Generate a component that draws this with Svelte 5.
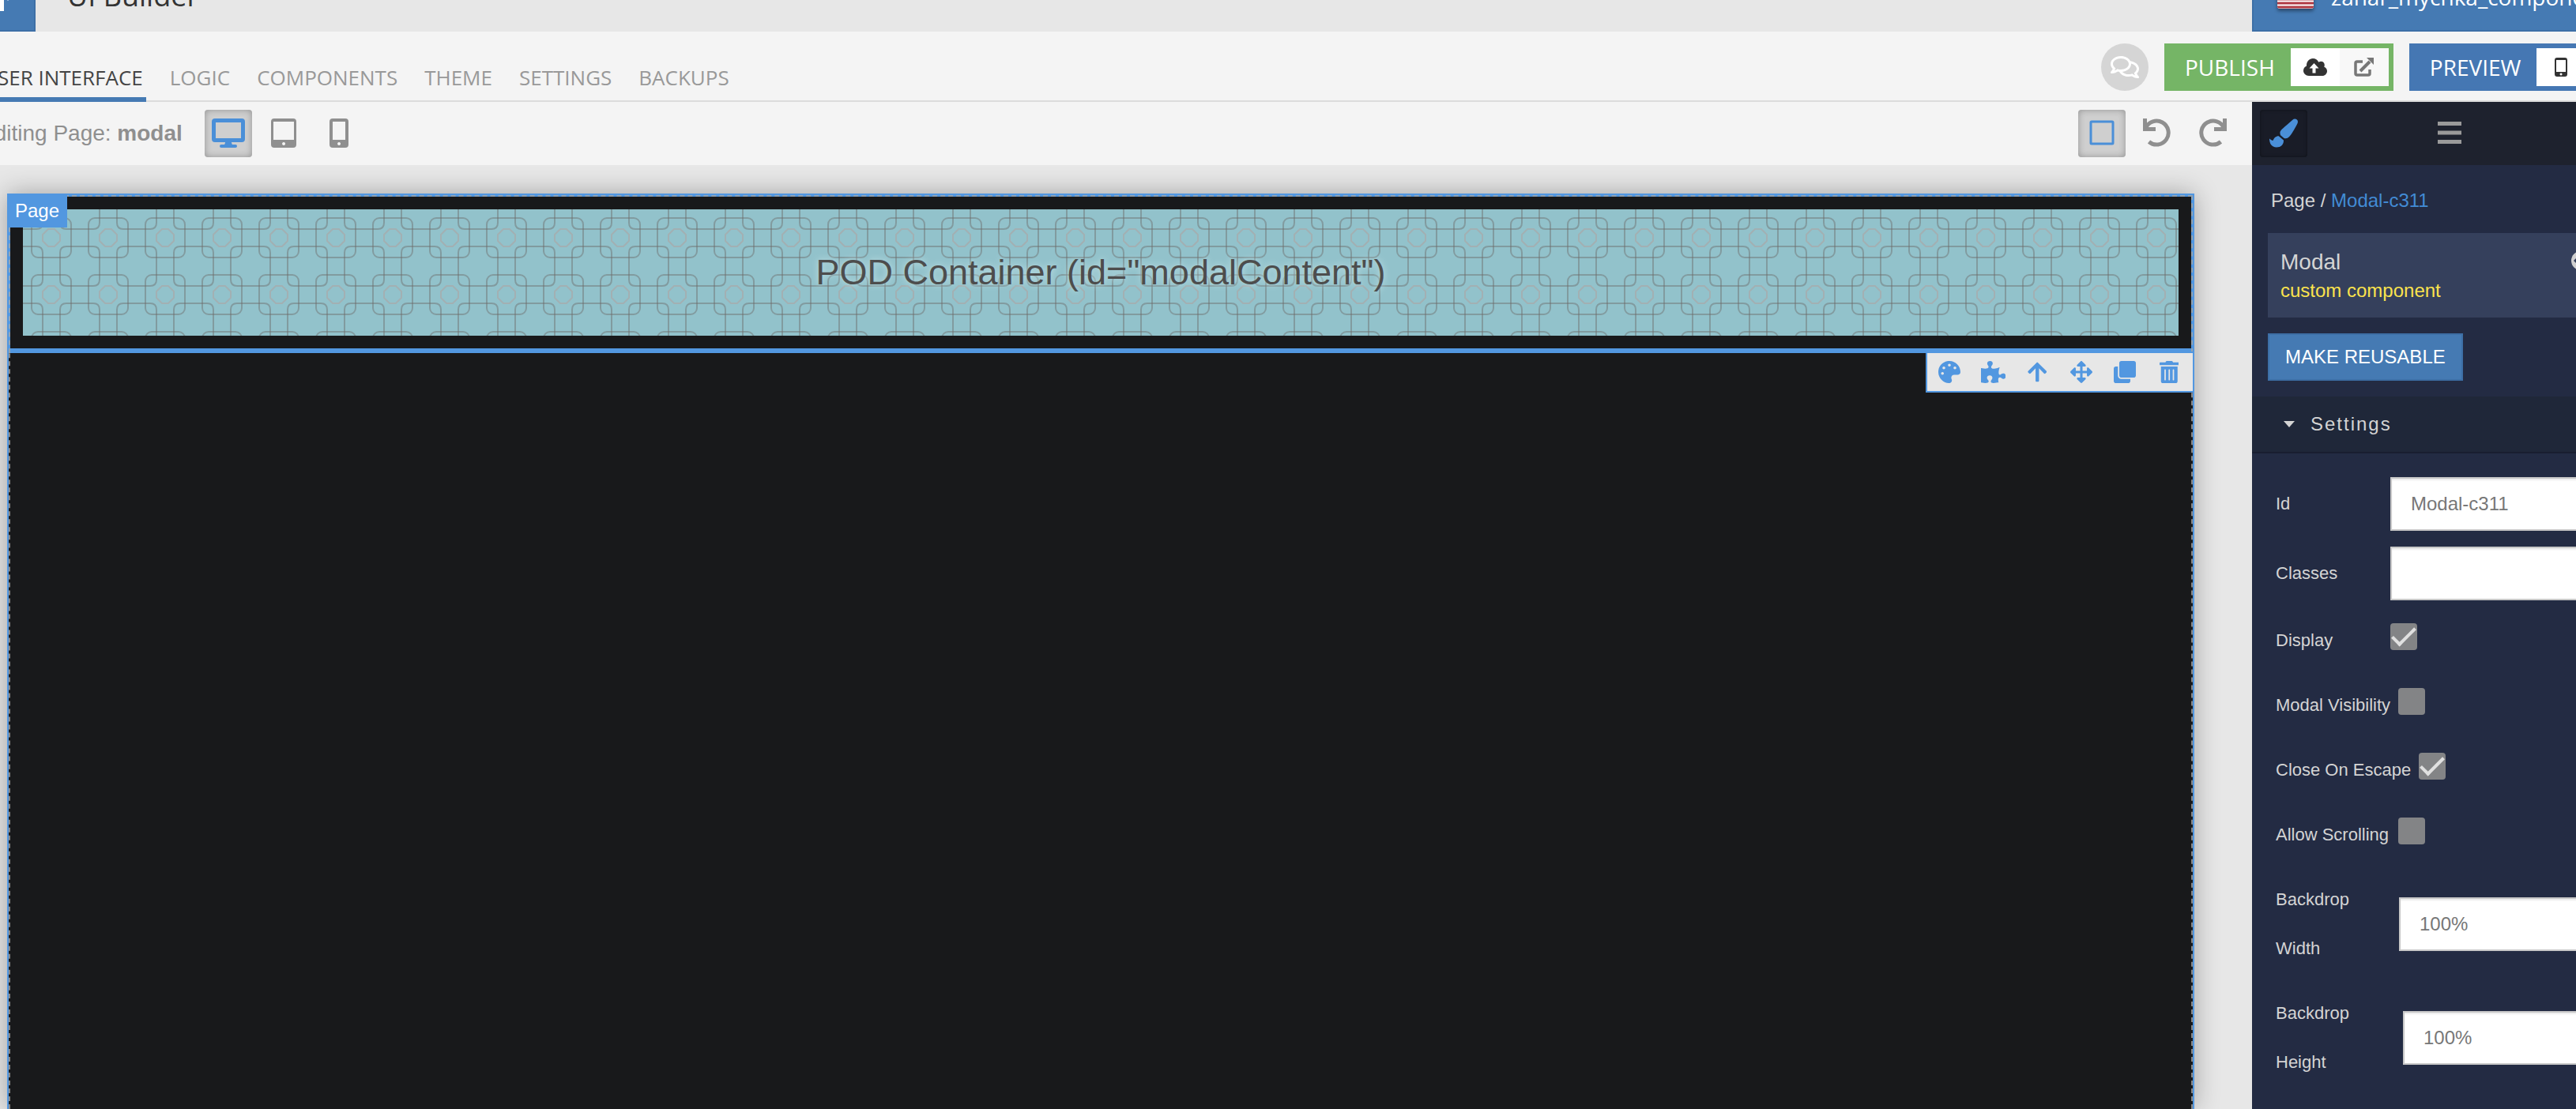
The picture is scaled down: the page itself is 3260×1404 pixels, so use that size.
<script>
  const tabs = ['User Interface', 'Logic', 'Components', 'Theme', 'Settings', 'Backups'];

  const tools = [
    { name: 'Style', box: '0 0 512 512', d: 'M204.3 5C104.9 24.4 24.8 104.3 5.2 203.4c-37 187 131.7 326.4 258.8 306.7 41.2-6.4 61.4-54.6 42.5-91.7-23.1-45.4 9.9-98.4 60.9-98.4h79.7c35.8 0 64.8-29.6 64.9-65.3C511.5 97.1 368.1-26.9 204.3 5zM96 320c-17.7 0-32-14.3-32-32s14.3-32 32-32 32 14.3 32 32-14.3 32-32 32zm32-128c-17.7 0-32-14.3-32-32s14.3-32 32-32 32 14.3 32 32-14.3 32-32 32zm128-64c-17.7 0-32-14.3-32-32s14.3-32 32-32 32 14.3 32 32-14.3 32-32 32zm128 64c-17.7 0-32-14.3-32-32s14.3-32 32-32 32 14.3 32 32-14.3 32-32 32z' },
    { name: 'Component', box: '0 0 576 512', d: 'M519.442 288.651c-41.519 0-59.5 31.593-82.058 31.593C377.409 320.244 432 144 432 144s-196.288 80-196.288-3.297c0-35.827 36.288-46.25 36.288-85.985C272 19.216 243.885 0 210.539 0c-34.654 0-66.366 18.891-66.366 56.346 0 41.364 31.711 59.277 31.711 81.75C175.885 207.719 0 166.758 0 166.758v333.237s178.635 41.047 178.635-28.662c0-22.473-40-40.107-40-81.471 0-37.456 29.25-56.346 63.577-56.346 33.673 0 61.788 19.216 61.788 54.717 0 39.735-36.288 50.158-36.288 85.985 0 60.803 129.675 25.73 181.23 25.73 0 0-34.725-120.101 25.827-120.101 35.962 0 46.423 36.152 86.308 36.152C556.712 416 576 387.99 576 354.443c0-34.199-18.962-65.792-56.558-65.792z' },
    { name: 'Select parent', box: '0 0 448 512', d: 'M34.9 289.5l-22.2-22.2c-9.4-9.4-9.4-24.6 0-33.9L207 39c9.4-9.4 24.6-9.4 33.9 0l194.3 194.3c9.4 9.4 9.4 24.6 0 33.9L413 289.4c-9.5 9.5-25 9.3-34.3-.4L264 168.6V456c0 13.3-10.7 24-24 24h-32c-13.3 0-24-10.7-24-24V168.6L69.2 289.1c-9.3 9.8-24.8 10-34.3.4z' },
    { name: 'Move', box: '0 0 512 512', d: 'M352.201 425.775l-79.196 79.196c-9.373 9.373-24.568 9.373-33.941 0l-79.196-79.196c-15.119-15.119-4.411-40.971 16.971-40.97h51.162L228 284H127.196v51.162c0 21.382-25.851 32.09-40.971 16.971L7.029 272.937c-9.373-9.373-9.373-24.569 0-33.941L86.225 159.8c15.119-15.119 40.971-4.411 40.971 16.971V228H228V127.196h-51.23c-21.382 0-32.09-25.851-16.971-40.971l79.196-79.196c9.373-9.373 24.568-9.373 33.941 0l79.196 79.196c15.119 15.119 4.411 40.971-16.971 40.971h-51.162V228h100.804v-51.162c0-21.382 25.851-32.09 40.97-16.971l79.196 79.196c9.373 9.373 9.373 24.569 0 33.941L425.773 352.2c-15.119 15.119-40.971 4.411-40.97-16.971V284H284v100.804h51.23c21.382 0 32.09 25.851 16.971 40.971z' },
    { name: 'Duplicate', box: '0 0 512 512', d: 'M464 0c26.51 0 48 21.49 48 48v288c0 26.51-21.49 48-48 48H176c-26.51 0-48-21.49-48-48V48c0-26.51 21.49-48 48-48h288M176 416c-44.112 0-80-35.888-80-80V128H48c-26.51 0-48 21.49-48 48v288c0 26.51 21.49 48 48 48h288c26.51 0 48-21.49 48-48v-48H176z' },
    { name: 'Delete', box: '0 0 448 512', d: 'M32 464a48 48 0 0 0 48 48h288a48 48 0 0 0 48-48V128H32zm272-256a16 16 0 0 1 32 0v224a16 16 0 0 1-32 0zm-96 0a16 16 0 0 1 32 0v224a16 16 0 0 1-32 0zm-96 0a16 16 0 0 1 32 0v224a16 16 0 0 1-32 0zM432 32H312l-9.4-18.7A24 24 0 0 0 281.1 0H166.8a23.72 23.72 0 0 0-21.4 13.3L136 32H16A16 16 0 0 0 0 48v32a16 16 0 0 0 16 16h416a16 16 0 0 0 16-16V48a16 16 0 0 0-16-16z' }
  ];

  let id = $state('Modal-c311');
  let classes = $state('');
  let backdropWidth = $state('100%');
  let backdropHeight = $state('100%');
  let flags = $state([
    { key: 'display', label: 'Display', on: true },
    { key: 'visible', label: 'Modal Visibility', on: false },
    { key: 'escape', label: 'Close On Escape', on: true },
    { key: 'scroll', label: 'Allow Scrolling', on: false }
  ]);
</script>

<div class="app">
  <header class="top">
    <div class="logo">
      <svg viewBox="0 0 45 40" aria-hidden="true"><path d="M0 0h5v14H0z" fill="#fff" /><circle cx="10" cy="0" r="1" fill="#a9c4e4" /></svg>
    </div>
    <h1>UI Builder</h1>
    <div class="account">
      <svg class="flag" viewBox="0 0 46 32" aria-hidden="true">
        <rect width="46" height="32" fill="#fff" />
        <path d="M0 1h46M0 6h46M0 11h46M0 16h46M0 20h46M0 25h46M0 30h46" stroke="#b03a43" stroke-width="3" />
        <rect width="20" height="18" fill="#3c3b6e" />
      </svg>
      <span>zahar_mychka_components</span>
    </div>
  </header>

  <div class="navbar">
    <nav class="tabs">
      {#each tabs as tab, i}
        <a href="#{tab}" class:active={i === 0}>{tab}</a>
      {/each}
    </nav>
    <div class="actions">
      <button class="chat" aria-label="Comments">
        <svg viewBox="0 32 576 448" aria-hidden="true">
          <path fill="#fff" d="M532 386.200c27.500-27.100 44-61.100 44-98.200 0-80-76.500-146.100-176.200-157.900C368.300 72.500 294.300 32 208 32 93.100 32 0 103.600 0 192c0 37 16.500 71 44 98.200-15.300 30.700-37.300 54.500-37.700 54.900-6.300 6.700-8.100 16.500-4.400 25 3.600 8.500 12 14 21.200 14 53.500 0 96.700-20.200 125.200-38.800 9.200 2.100 18.700 3.700 28.400 4.900C208.100 407.600 281.800 448 368 448c20.800 0 40.800-2.400 59.800-6.800C456.300 459.700 499.400 480 553 480c9.200 0 17.500-5.500 21.200-14 3.600-8.500 1.900-18.300-4.400-25-.4-.3-22.500-24.100-37.800-54.800zm-392.800-92.300L122.100 305c-14.100 9.100-28.500 16.300-43.100 21.400 2.700-4.700 5.400-9.700 8-14.800l15.500-31.100L77.700 256C64.200 242.600 48 220.700 48 192c0-60.700 73.300-112 160-112s160 51.300 160 112-73.300 112-160 112c-16.500 0-33-1.900-49-5.600l-19.800-4.500zM498.300 352l-24.700 24.400 15.500 31.100c2.600 5.100 5.300 10.100 8 14.800-14.600-5.100-29-12.300-43.100-21.400l-17.100-11.100-19.900 4.600c-16 3.700-32.500 5.600-49 5.600-54 0-102.200-20.100-131.300-49.700C338 339.500 416 272.900 416 192c0-3.400-.4-6.700-.7-10C479.700 196.500 528 238.800 528 288c0 28.700-16.200 50.600-29.700 64z" />
        </svg>
      </button>
      <div class="split publish">
        <button class="main">Publish</button>
        <button class="sub" aria-label="Upload">
          <svg width="30" height="22" viewBox="0 0 30 22" aria-hidden="true">
            <path fill="#333" d="M7 22C3 22 0 19 0 15.500c0-2.700 1.600-5 4-6V8.500C4 3.800 7.600 0 12 0c3.300 0 6 1.900 7.300 4.700 .9-.7 1.900-1 3-1 2.600 0 4.500 2 4.500 4.500 0 .8-.2 1.500-.6 2.200C28.500 11.300 30 13.400 30 16c0 3.300-2.700 6-6 6z" />
            <path fill="#fff" d="M13.500 6l6 6.500h-4v6h-4v-6h-4z" />
          </svg>
        </button>
        <button class="sub dim" aria-label="Open published">
          <svg width="25" height="24" viewBox="0 0 25 24" aria-hidden="true">
            <path d="M11 5H4Q2 5 2 7v13q0 2 2 2h14q2 0 2-2v-5" fill="none" stroke="#777" stroke-width="3.500" />
            <path d="M8 17L20 5" stroke="#777" stroke-width="4" />
            <path d="M16 0h9v9z" fill="#777" />
          </svg>
        </button>
      </div>
      <div class="split preview">
        <button class="main">Preview</button>
        <button class="sub" aria-label="Preview on phone">
          <svg width="16" height="24" viewBox="0 0 16 24" aria-hidden="true"><path fill="#333" fill-rule="evenodd" d="M3 0h10q3 0 3 3v18q0 3-3 3H3q-3 0-3-3V3q0-3 3-3zM2 3v15h12V3zM8 19.500a1.500 1.500 0 1 0 .1 0z" /></svg>
        </button>
        <button class="sub dim" aria-label="Open preview"></button>
      </div>
    </div>
  </div>

  <div class="work">
    <main>
      <div class="bar">
        <p>Editing Page: <strong>modal</strong></p>
        <div class="devices">
          <button class="tool on" aria-label="Desktop">
            <svg width="42" height="37" viewBox="0 0 42 37" aria-hidden="true"><path fill="#4a8fd8" fill-rule="evenodd" d="M4 0h34q4 0 4 4v22q0 4-4 4H25q0 2 1 3h4q2 0 2 2t-2 2H12q-2 0-2-2t2-2h4q1-1 1-3H4q-4 0-4-4V4q0-4 4-4zM5 5v20h32V5z" /></svg>
          </button>
          <button class="tool" aria-label="Tablet">
            <svg width="32" height="37" viewBox="0 0 32 37" aria-hidden="true"><path fill="#8f8f8f" fill-rule="evenodd" d="M4 0h24q4 0 4 4v29q0 4-4 4H4q-4 0-4-4V4q0-4 4-4zM3 4v23h26V4zM16 30a2 2 0 1 0 .1 0z" /></svg>
          </button>
          <button class="tool" aria-label="Phone">
            <svg width="24" height="37" viewBox="0 0 24 37" aria-hidden="true"><path fill="#8f8f8f" fill-rule="evenodd" d="M4 0h16q4 0 4 4v29q0 4-4 4H4q-4 0-4-4V4q0-4 4-4zM4 4v23h16V4zM12 30a2 2 0 1 0 .1 0z" /></svg>
          </button>
        </div>
        <div class="history">
          <button class="tool on" aria-label="Outlines">
            <svg width="32" height="32" viewBox="0 0 32 32" aria-hidden="true"><rect x="2" y="2" width="28" height="28" rx="1" fill="none" stroke="#4a8fd8" stroke-width="3" /></svg>
          </button>
          <button class="tool" aria-label="Undo">
            <svg width="36" height="36" viewBox="0 0 36 36" aria-hidden="true"><path d="M3.500 12A15 15 0 1 1 7.500 29.500" fill="none" stroke="#8f8f8f" stroke-width="5" /><path d="M0 0h5v11h11v5H0z" fill="#8f8f8f" /></svg>
          </button>
          <button class="tool" aria-label="Redo">
            <svg width="36" height="36" viewBox="0 0 36 36" aria-hidden="true"><path d="M32.500 12A15 15 0 1 0 28.500 29.500" fill="none" stroke="#8f8f8f" stroke-width="5" /><path d="M36 0h-5v11H20v5h16z" fill="#8f8f8f" /></svg>
          </button>
        </div>
      </div>

      <div class="stage">
        <div class="page">
          <span class="badge">Page</span>
          <section class="pod">
            <div class="tile">
              <svg class="weave" aria-hidden="true">
                <defs>
                  <pattern id="weave" width="72" height="72" patternUnits="userSpaceOnUse">
                    <g fill="none" stroke="#6d6b6b" stroke-opacity=".45" stroke-width="2">
                      <rect x="11" y="11" width="50" height="50" rx="8" />
                      <path d="M25 0v17q0 8-8 8H0M47 0v17q0 8 8 8h17M0 47h17q8 0 8 8v17M72 47H55q-8 0-8 8v17" />
                      <path d="M32 25h8l7 7v8l-7 7h-8l-7-7v-8z" stroke="#b8968f" stroke-opacity=".4" />
                    </g>
                  </pattern>
                </defs>
                <rect width="100%" height="100%" fill="url(#weave)" />
              </svg>
              <h2>POD Container (id="modalContent")</h2>
            </div>
            <div class="tools" role="toolbar">
              {#each tools as t}
                <button aria-label={t.name}><svg viewBox={t.box} aria-hidden="true"><path fill="#5297e0" d={t.d} /></svg></button>
              {/each}
            </div>
          </section>
        </div>
      </div>
    </main>

    <aside>
      <div class="panel-tabs">
        <button class="tool dark" aria-label="Styles">
          <svg width="36" height="37" viewBox="0 0 512 512" aria-hidden="true"><path fill="#4a8fd8" d="M167.020 309.340c-40.120 2.580-76.530 17.860-97.190 72.300-2.350 6.210-8 9.980-14.590 9.980-11.110 0-45.460-27.670-55.250-34.350C0 439.620 37.930 512 128 512c75.860 0 128-43.770 128-120.190 0-3.110-.65-6.080-.97-9.130l-88.010-73.340zM457.890 0c-15.160 0-29.370 6.710-40.210 16.450C213.270 199.050 192 203.340 192 257.090c0 13.700 3.250 26.760 8.730 38.700l63.820 53.180c7.210 1.800 14.640 3.030 22.390 3.030 62.110 0 98.110-45.470 211.160-256.460 7.380-14.350 13.900-29.850 13.900-45.990C512 20.640 486 0 457.890 0z" /></svg>
        </button>
        <button class="tool" aria-label="Tree">
          <svg width="32" height="30" viewBox="0 0 32 30" aria-hidden="true"><path d="M1 3.500h30M1 15h30M1 26.500h30" stroke="#9a9a9a" stroke-width="5" /></svg>
        </button>
      </div>
      <p class="crumbs">Page / <a href="#modal">Modal-c311</a></p>
      <div class="card">
        <div>
          <h3>Modal</h3>
          <p>custom component</p>
        </div>
        <svg width="24" height="24" viewBox="0 0 24 24" aria-hidden="true"><circle cx="12" cy="12" r="12" fill="#d0d0d0" /><path fill="#35405c" d="M3 12l6-6v12z" /></svg>
      </div>
      <button class="reuse">Make reusable</button>
      <button class="section"><svg width="14" height="8" viewBox="0 0 14 8" aria-hidden="true"><path d="M0 0h14L7 8z" fill="#d4d4d4" /></svg><span>Settings</span></button>
      <form>
        <div class="row"><label for="id">Id</label><input id="id" type="text" bind:value={id} /></div>
        <div class="row"><label for="classes">Classes</label><input id="classes" type="text" bind:value={classes} /></div>
        {#each flags as f}
          <div class="row check"><label for={f.key}>{f.label}</label><input id={f.key} type="checkbox" bind:checked={f.on} /></div>
        {/each}
        <div class="row"><label class="wrap" for="bw">Backdrop Width</label><input id="bw" type="text" bind:value={backdropWidth} /></div>
        <div class="row"><label class="wrap tall" for="bh">Backdrop Height</label><input id="bh" type="text" bind:value={backdropHeight} /></div>
      </form>
    </aside>
  </div>
</div>

<style>
  :global(body) { overflow: hidden; }
  .app, .app * { box-sizing: border-box; }
  .app {
    height: 100vh;
    display: flex;
    flex-direction: column;
    overflow: hidden;
    background: #e7e7e7;
    font-family: "Liberation Sans", Arial, sans-serif;
    font-size: 24px;
  }
  h1, h2, h3, p { margin: 0; font-weight: 400; }
  a { color: inherit; text-decoration: none; }
  button { margin: 0; padding: 0; border: 0; background: none; font: inherit; color: inherit; cursor: pointer; }
  svg { display: block; flex: none; }

  .top { flex: none; height: 40px; display: flex; background: #e7e7e7; font-family: "Open Sans", sans-serif; overflow: hidden; }
  .logo { width: 45px; background: #457ab3; border: solid #3d6fa6; border-width: 0 2px 2px 0; }
  .logo svg { width: 45px; height: 40px; }
  h1 { flex: 1; margin-top: -29px; padding-left: 40px; font-size: 36px; line-height: 48px; color: #333; }
  .account { flex: none; width: 410px; padding-left: 30px; display: flex; gap: 22px; background: #457ab3; border: solid #3d6fa6; border-width: 0 0 2px 2px; color: #fff; font-size: 28px; line-height: 40px; }
  .account span { margin-top: -24px; }
  .flag { width: 46px; height: 32px; margin-top: -21px; border-radius: 3px; filter: drop-shadow(0 3px 2px rgba(0, 0, 0, .4)); }

  .navbar { flex: none; height: 89px; display: flex; justify-content: space-between; background: #f4f4f4; border-bottom: 2px solid #dcdcdc; font-family: "Open Sans", sans-serif; }
  .tabs { display: flex; gap: 26px; margin-left: -26px; }
  .tabs a { height: 89px; padding: 34px 4px 0; font-size: 26px; line-height: 48px; text-transform: uppercase; white-space: nowrap; color: #999; }
  .tabs a.active { color: #444; border-bottom: 6px solid #457ab3; }
  .actions { display: flex; gap: 20px; flex: none; width: 601px; padding-top: 15px; }
  .chat { flex: none; width: 60px; height: 60px; border-radius: 50%; background: #d5d5d5; display: grid; place-items: center; }
  .chat svg { width: 36px; height: 28px; }
  .split { flex: none; height: 60px; display: flex; padding: 6px; color: #fff; font-size: 28px; }
  .publish { background: #75b566; }
  .preview { background: #4577b3; }
  .main { padding: 0 20px; text-transform: uppercase; line-height: 48px; }
  .sub { width: 62px; background: #fff; display: grid; place-items: center; }
  .dim { background: #f8f8f8; }

  .work { flex: 1; min-height: 0; display: flex; }
  main { flex: 1; min-width: 0; display: flex; flex-direction: column; }
  .bar { flex: none; height: 80px; display: flex; align-items: center; background: #f4f4f4; color: #8f8f8f; font-size: 28px; }
  .bar p { margin-left: -26px; white-space: nowrap; }
  .devices, .history { display: flex; gap: 10px; }
  .devices { margin-left: 28px; }
  .history { margin-left: auto; padding-right: 20px; }
  .tool { flex: none; width: 60px; height: 60px; padding-bottom: 2px; border-radius: 4px; display: grid; place-items: center; }
  .tool.on { background: #cfcfcf; box-shadow: inset 0 0 8px rgba(0, 0, 0, .3); }
  .stage { flex: 1; min-height: 0; padding: 36px 73px 0 9px; }
  .page { position: relative; height: 100%; background: #18191b; border: solid #5297e0; border-width: 2px 2px 0; box-shadow: 0 0 30px rgba(0, 0, 0, .3); }
  .page::before { content: ""; position: absolute; inset: 0; border: dashed #858585; border-width: 2px 2px 0; pointer-events: none; }
  .badge { position: absolute; z-index: 1; top: -2px; left: -2px; padding: 0 10px; background: #5297e0; color: #fff; line-height: 43px; }
  .pod { position: relative; padding: 16px; border: solid #5297e0; border-width: 2px 2px 6px; }
  .pod::before { content: ""; position: absolute; inset: -2px; height: 198px; border: dashed #8fa3b5; border-width: 2px 2px 0; pointer-events: none; }
  .tile { position: relative; height: 160px; display: grid; place-items: center; background: #92c2cb; }
  .weave { position: absolute; inset: 0; width: 100%; height: 100%; }
  h2 { position: relative; font-size: 45px; line-height: 60px; color: #4d4d4d; text-shadow: 0 0 8px #c4e2e6; }
  .tools { position: absolute; top: 196px; right: -4px; width: 340px; height: 52px; display: grid; grid-template-columns: repeat(6, 1fr); padding-right: 2px; background: #e7e7e7; border: 2px solid #5297e0; }
  .tools button { display: grid; place-items: center; }
  .tools svg { height: 28px; }

  aside { flex: none; width: 410px; background: #232b43; color: #d4d4d4; overflow: hidden; }
  .panel-tabs { height: 80px; padding: 10px; display: flex; gap: 150px; background: #1e222e; }
  .tool.dark { background: #191c27; box-shadow: inset 0 0 4px rgba(0, 0, 0, .4); }
  .crumbs { padding: 30px 24px 26px; line-height: 30px; }
  .crumbs a { color: #428bd5; }
  .card { width: 430px; height: 107px; margin-left: 20px; padding: 18px 22px 0 16px; display: flex; justify-content: space-between; background: #35405c; }
  h3 { font-size: 28px; line-height: 38px; }
  .card p { line-height: 34px; color: #fbe34d; }
  .card svg { margin-top: 5px; }
  .reuse { display: block; margin: 20px; padding: 0 20px; height: 60px; background: #457ab3; border: 2px solid #3d6fa6; color: #fff; text-transform: uppercase; }
  .section { width: 100%; height: 72px; display: flex; align-items: center; gap: 20px; padding-left: 40px; background: #1f2739; border-bottom: 2px solid #191e30; letter-spacing: 2px; }
  form { display: flex; flex-direction: column; gap: 20px; padding: 30px 0 0 30px; width: 640px; }
  .row { display: flex; align-items: center; font-size: 22px; line-height: 62px; }
  .row label { flex: none; min-width: 145px; white-space: nowrap; }
  .row .wrap { width: 156px; white-space: normal; padding-right: 20px; }
  .row .tall { width: 161px; }
  input[type="text"] { flex: none; width: 440px; height: 68px; padding: 0 24px; border: 2px solid #c8c8c8; border-radius: 0; background: #fff; box-shadow: inset 0 2px 2px rgba(0, 0, 0, .08); font: 24px "Liberation Sans", Arial, sans-serif; color: #777; }
  input[type="checkbox"] { appearance: none; flex: none; width: 34px; height: 34px; margin: 0 0 10px 10px; border-radius: 4px; background: #838486; display: grid; place-items: center; }
  .check:has(#display) input { margin-left: 0; }
  input[type="checkbox"]:checked::after { content: ""; width: 26px; height: 11px; margin-bottom: 7px; border: solid #e0e0e0; border-width: 0 0 4px 4px; rotate: -45deg; }
</style>
